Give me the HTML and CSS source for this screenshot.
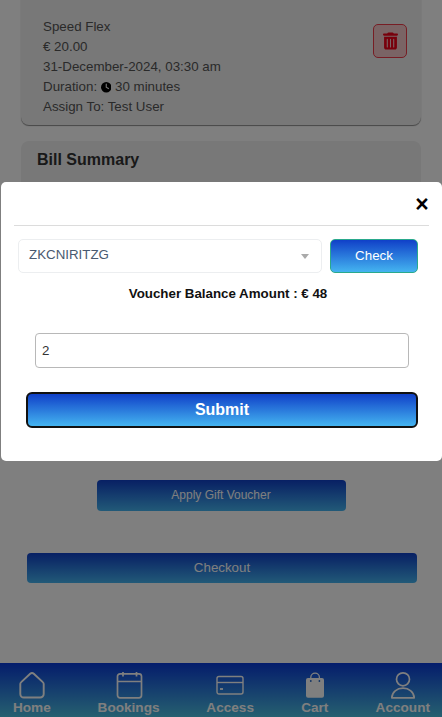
FILE: index.html
```html
<!DOCTYPE html>
<html lang="en">
<head>
  <meta charset="UTF-8" />
  <meta name="viewport" content="width=device-width, initial-scale=1.0" />
  <title>Cart</title>
  <link rel="stylesheet" href="styles.css">
</head>
<body>
  <div class="page">
    <main class="content">
      <section class="card order-card">
        <div class="order-info">
          <h3 class="order-title">Your Order</h3>
          <p>Speed Flex</p>
          <p>€ 20.00</p>
          <p>31-December-2024, 03:30 am</p>
          <p>Duration:
            <svg class="clock" viewBox="0 0 24 24"><circle cx="12" cy="12" r="12" fill="#000"/><path d="M12 5v7l5 3" fill="none" stroke="#f0f0f0" stroke-width="2.6" stroke-linecap="round"/></svg>
            30 minutes</p>
          <p>Assign To: Test User</p>
        </div>
        <button class="delete-btn" type="button" aria-label="Delete">
          <svg viewBox="0 0 448 512"><path fill="#f00018" d="M135.2 17.7C140.6 6.8 151.7 0 163.8 0H284.2c12.1 0 23.2 6.8 28.6 17.7L320 32h96c17.7 0 32 14.3 32 32s-14.3 32-32 32H32C14.3 96 0 81.7 0 64S14.3 32 32 32h96l7.2-14.3zM32 128H416V448c0 35.3-28.7 64-64 64H96c-35.3 0-64-28.7-64-64V128zm96 64c-8.8 0-16 7.2-16 16V432c0 8.8 7.2 16 16 16s16-7.2 16-16V208c0-8.8-7.2-16-16-16zm96 0c-8.8 0-16 7.2-16 16V432c0 8.8 7.2 16 16 16s16-7.2 16-16V208c0-8.8-7.2-16-16-16zm96 0c-8.8 0-16 7.2-16 16V432c0 8.8 7.2 16 16 16s16-7.2 16-16V208c0-8.8-7.2-16-16-16z"/></svg>
        </button>
      </section>
      <section class="card bill-card">
        <h2>Bill Summary</h2>
      </section>
      <button class="grad-btn gift-btn" type="button">Apply Gift Voucher</button>
      <button class="grad-btn checkout-btn" type="button">Checkout</button>
    </main>

    <nav class="footer-nav">
      <a class="nav-item">
        <svg viewBox="0 0 28 28"><path d="M12.2 2.800a2.600 2.600 0 0 1 3.600 0l9 8.300a2.600 2.600 0 0 1 .9 2V23a3.500 3.500 0 0 1-3.500 3.500H5.800A3.500 3.500 0 0 1 2.300 23v-9.900a2.600 2.600 0 0 1 .9-2z" fill="none" stroke="currentColor" stroke-width="1.900" stroke-linejoin="round"/></svg>
        <span>Home</span>
      </a>
      <a class="nav-item">
        <svg viewBox="0 0 28 28"><rect x="2.500" y="2.800" width="24" height="24" rx="2.500" fill="none" stroke="currentColor" stroke-width="1.700"/><path d="M2.500 10.500h24M8 1v4.500M21.500 1v4.500" fill="none" stroke="currentColor" stroke-width="1.700"/></svg>
        <span>Bookings</span>
      </a>
      <a class="nav-item">
        <svg viewBox="0 0 28 28"><rect x="1" y="5.500" width="26" height="17.500" rx="2" fill="none" stroke="currentColor" stroke-width="1.400"/><path d="M1 11.500h26" stroke="currentColor" stroke-width="1.400"/><path d="M4 18h3" stroke="currentColor" stroke-width="1.800"/></svg>
        <span>Access</span>
      </a>
      <a class="nav-item">
        <svg viewBox="0 0 28 28"><path d="M7 7h14a2 2 0 0 1 2 2v15.700a2 2 0 0 1-2 2H7a2 2 0 0 1-2-2V9a2 2 0 0 1 2-2z" fill="currentColor"/><path d="M9.800 9V6.400a4.300 4.300 0 0 1 8.600 0V9" fill="none" stroke="currentColor" stroke-width="1.300"/><circle cx="9.800" cy="10" r=".9" fill="#2468c8"/><circle cx="18.400" cy="10" r=".9" fill="#2468c8"/></svg>
        <span>Cart</span>
      </a>
      <a class="nav-item">
        <svg viewBox="0 0 28 28"><circle cx="14" cy="8.300" r="6.500" fill="none" stroke="currentColor" stroke-width="1.700"/><path d="M2.800 26.800C3 21 8 17.200 14 17.200S25 21 25.200 26.800z" fill="none" stroke="currentColor" stroke-width="1.700" stroke-linejoin="round"/></svg>
        <span>Account</span>
      </a>
    </nav>
  </div>

  <div class="backdrop"></div>

  <div class="modal">
    <div class="modal-header">
      <button class="close-btn" type="button" aria-label="Close">×</button>
    </div>
    <div class="voucher-row">
      <div class="voucher-select">
        <span>ZKCNIRITZG</span>
        <i class="caret"></i>
      </div>
      <button class="grad-btn check-btn" type="button">Check</button>
    </div>
    <p class="balance">Voucher Balance Amount : € 48</p>
    <input class="amount-input" type="text" value="2" />
    <button class="grad-btn submit-btn" type="button">Submit</button>
  </div>
</body>
</html>
```

FILE: styles.css
```css
* {
  box-sizing: border-box;
}
body {
  margin: 0;
  height: 100vh;
  background: #fff;
  overflow: hidden;
  font-family: "Liberation Sans", Arial, sans-serif;
  font-size: 13.33px;
  color: #212529;
}
p, h2, h3 {
  margin: 0;
}
.page {
  height: 717px;
  display: flex;
  flex-direction: column;
  overflow: hidden;
}
.content {
  flex: 1;
  display: flex;
  flex-direction: column;
  align-items: center;
}
.card {
  width: 400px;
  background: #f0f0f0;
  border-radius: 8px;
}
.order-card {
  margin-top: -30px;
  height: 155px;
  padding: 13px 14px 0 22px;
  display: flex;
  justify-content: space-between;
  align-items: flex-start;
  box-shadow: 0 1px 1px rgba(0, 0, 0, 0.45);
}
.order-title {
  margin: 0 0 14px -3px;
  font-size: 15px;
  line-height: 20px;
  color: #333;
}
.order-info p {
  line-height: 20px;
  color: #555;
}
.clock {
  width: 10.5px;
  height: 10.5px;
  vertical-align: -1.500px;
}
.delete-btn {
  margin-top: 41px;
  width: 34px;
  height: 34px;
  padding: 0;
  display: flex;
  align-items: center;
  justify-content: center;
  background: #f4c8ca;
  border: 1px solid #ee3a48;
  border-radius: 5px;
}
.delete-btn svg {
  width: 15px;
  height: 18px;
}
.bill-card {
  margin-top: 16px;
  height: 300px;
  padding: 9px 16px;
}
.bill-card h2 {
  font-size: 16px;
  line-height: 20px;
  color: #333;
}
.grad-btn {
  background: linear-gradient(to bottom, #1040c8, #44b4f0);
  color: #fff;
  font-family: inherit;
  font-size: 13.33px;
  border: none;
  border-radius: 4px;
}
.gift-btn {
  margin-top: 39px;
  width: 249px;
  height: 31px;
  padding-bottom: 2px;
  font-size: 12px;
}
.checkout-btn {
  margin: 42px 0 0 2px;
  width: 390px;
  height: 30px;
  padding-bottom: 2px;
}
.footer-nav {
  height: 54px;
  padding: 8px 12px 0 13px;
  display: flex;
  justify-content: space-between;
  background: linear-gradient(to bottom, #0a3ad8, #4cc0e0);
  color: #fff;
}
.nav-item {
  display: flex;
  flex-direction: column;
  align-items: center;
  font-size: 13.6px;
  font-weight: bold;
  line-height: 16px;
}
.nav-item svg {
  width: 28px;
  height: 28px;
  margin-bottom: 1px;
}
.backdrop {
  position: fixed;
  inset: 0;
  background: rgba(0, 0, 0, 0.5);
}
.modal {
  position: fixed;
  left: 1px;
  top: 182px;
  width: 441px;
  height: 279px;
  background: #fff;
  border-radius: 5px;
  padding: 0 13px;
}
.modal-header {
  height: 44px;
  border-bottom: 1px solid #dcdcdc;
  display: flex;
  justify-content: flex-end;
  align-items: center;
}
.close-btn {
  background: none;
  border: none;
  padding: 0;
  width: 14px;
  font-family: inherit;
  font-size: 23px;
  font-weight: bold;
  line-height: 24px;
  color: #000;
}
.voucher-row {
  display: flex;
  gap: 8px;
  margin: 13px 11px 0 4px;
}
.voucher-select {
  flex: 1;
  height: 34px;
  padding: 0 11px 0 10px;
  display: flex;
  align-items: center;
  justify-content: space-between;
  border: 1px solid #eceef0;
  border-radius: 5px;
  color: #495a70;
}
.voucher-select span {
  margin-bottom: 3px;
}
.caret {
  width: 0;
  height: 0;
  margin-right: 1px;
  border-left: 4px solid transparent;
  border-right: 4px solid transparent;
  border-top: 5px solid #aaa;
}
.check-btn {
  width: 88px;
  height: 34px;
  padding-bottom: 2px;
  border: 1px solid #2aa98c;
  border-radius: 5px;
}
.balance {
  margin-top: 13px;
  padding-left: 13px;
  text-align: center;
  font-weight: bold;
  line-height: 16px;
  color: #111;
}
.amount-input {
  display: block;
  margin: 31px 0 0 21px;
  width: 374px;
  height: 35px;
  padding: 0 6px;
  border: 1px solid #b8b8b8;
  border-radius: 4px;
  font-family: inherit;
  font-size: 13.33px;
  color: #333;
}
.submit-btn {
  display: block;
  margin: 24px 0 0 12px;
  width: 392px;
  height: 36px;
  border: 2px solid #111;
  border-radius: 6px;
  font-size: 16px;
  font-weight: bold;
}
```
